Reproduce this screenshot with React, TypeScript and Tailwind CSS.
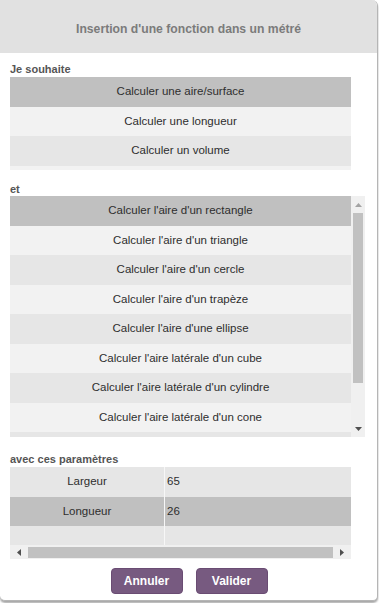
import React from "react";

const font = { fontFamily: '"Liberation Sans", Arial, sans-serif' };

const choices = ["Calculer une aire/surface", "Calculer une longueur", "Calculer un volume", ""];

// the last entry only peeks out under the visible rows
const functions = [
  "Calculer l'aire d'un rectangle",
  "Calculer l'aire d'un triangle",
  "Calculer l'aire d'un cercle",
  "Calculer l'aire d'un trapèze",
  "Calculer l'aire d'une ellipse",
  "Calculer l'aire latérale d'un cube",
  "Calculer l'aire latérale d'un cylindre",
  "Calculer l'aire latérale d'un cone",
  "",
];

const params = [
  { name: "Largeur", value: "65" },
  { name: "Longueur", value: "26" },
  { name: "", value: "" },
];

function rowBg(i: number, selected: number) {
  if (i === selected) return "bg-[#c0c0c0]";
  return i % 2 === 0 ? "bg-[#e6e6e6]" : "bg-[#f2f2f2]";
}

function Label({ children }: { children: React.ReactNode }) {
  return (
    <div className="h-[15px] text-[11px] leading-[15px] font-bold text-[#555]">
      {children}
    </div>
  );
}

export default function App() {
  return (
    <div className="w-[379px] h-[603px] bg-white overflow-hidden" style={font}>
      <div className="w-[378px] h-[601px] bg-white border-r border-b border-[#b5b5b5] rounded-tr-[6px] rounded-b-[5px] overflow-hidden shadow-[0_2px_2px_rgba(0,0,0,0.35)] flex flex-col">
        {/* header */}
        <div className="h-[53px] bg-[#e1e1e1] flex items-center justify-center pt-[5px] shrink-0">
          <span className="text-[12.2px] font-bold text-[#7b7b7b]">
            Insertion d'une fonction dans un métré
          </span>
        </div>

        <div className="px-[10px] flex flex-col">
          <div className="mt-[9px]">
            <Label>Je souhaite</Label>
          </div>
          <div className="w-[341px] h-[93px] overflow-hidden">
            {choices.map((c, i) => (
              <div
                key={i}
                className={`h-[29.5px] flex items-center justify-center text-[11.5px] text-[#2e2e2e] ${rowBg(i, 0)}`}
              >
                {c}
              </div>
            ))}
          </div>

          <div className="mt-[12px] h-[14px] text-[11px] leading-[14px] font-bold text-[#555]">et</div>
          <div className="flex w-[355px] h-[241px]">
            <div className="w-[341px] h-full overflow-hidden">
              {functions.map((f, i) => (
                <div
                  key={i}
                  className={`h-[29.5px] flex items-center justify-center text-[11.5px] text-[#2e2e2e] ${rowBg(i, 0)}`}
                >
                  {f}
                </div>
              ))}
            </div>
            <div className="w-[14px] h-full bg-[#f0f0f0] flex flex-col">
              <div className="h-[17px] flex items-center justify-center">
                <svg width="7" height="4" viewBox="0 0 7 4">
                  <path d="M0 4 L3.5 0 L7 4 Z" fill="#a3a3a3" />
                </svg>
              </div>
              <div className="ml-[2px] w-[10px] h-[170px] bg-[#c1c1c1]" />
              <div className="flex-1" />
              <div className="h-[17px] flex items-center justify-center">
                <svg width="7" height="4" viewBox="0 0 7 4">
                  <path d="M0 0 L7 0 L3.5 4 Z" fill="#505050" />
                </svg>
              </div>
            </div>
          </div>

          <div className="mt-[15px]">
            <Label>avec ces paramètres</Label>
          </div>
          <div className="w-[341px] h-[78px] overflow-hidden">
            {params.map((p, i) => (
              <div
                key={i}
                className={`flex ${i === 2 ? "h-[19px]" : i === 0 ? "h-[30px]" : "h-[29px]"} text-[11.5px] text-[#2e2e2e] ${
                  i === 1 ? "bg-[#c0c0c0]" : "bg-[#e6e6e6]"
                }`}
              >
                <div className="w-[155px] flex items-center justify-center border-r-[1.5px] border-[#f7f7f7]">
                  {p.name}
                </div>
                <div className="flex-1 flex items-center pl-[2px]">{p.value}</div>
              </div>
            ))}
          </div>
          <div className="w-[341px] h-[14px] bg-[#f0f0f0] flex items-center">
            <div className="w-[17px] flex items-center justify-center">
              <svg width="4" height="7" viewBox="0 0 4 7">
                <path d="M4 0 L4 7 L0 3.5 Z" fill="#505050" />
              </svg>
            </div>
            <div className="ml-[1px] w-[305px] h-[11px] bg-[#c1c1c1]" />
            <div className="flex-1 flex items-center justify-center">
              <svg width="4" height="7" viewBox="0 0 4 7">
                <path d="M0 0 L4 3.5 L0 7 Z" fill="#505050" />
              </svg>
            </div>
          </div>

          <div className="mt-[9px] flex justify-center gap-[13px] pl-[1px]">
            <button className="w-[72px] h-[26px] rounded-[4px] bg-[#775a80] border border-[#6a4c73] text-white text-[12px] font-bold">
              Annuler
            </button>
            <button className="w-[72px] h-[26px] rounded-[4px] bg-[#775a80] border border-[#6a4c73] text-white text-[12px] font-bold">
              Valider
            </button>
          </div>
        </div>
      </div>
    </div>
  );
}
